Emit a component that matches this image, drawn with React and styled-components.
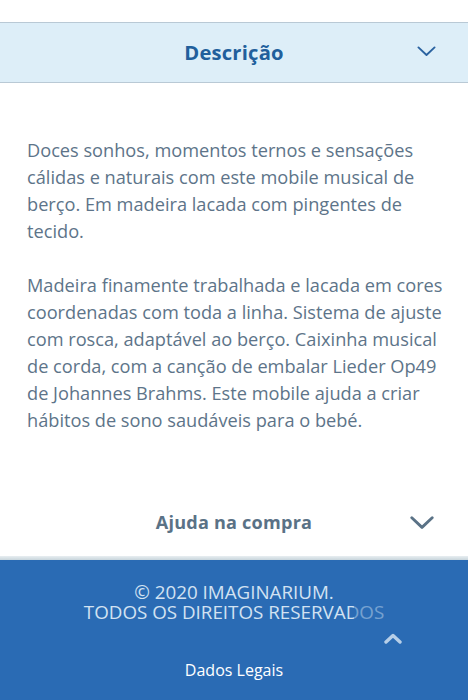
import React from "react";
import styled, { createGlobalStyle } from "styled-components";

const GlobalStyle = createGlobalStyle`
  html, body {
    margin: 0;
    padding: 0;
    background: #ffffff;
  }
  body {
    font-family: "Open Sans", "Liberation Sans", sans-serif;
  }
`;

const Page = styled.div`
  width: 468px;
  height: 700px;
  overflow: hidden;
  display: flex;
  flex-direction: column;
  background: #ffffff;

  & > * {
    flex-shrink: 0;
  }
`;

const TopGap = styled.div`
  height: 22px;
`;

const AccordionHeader = styled.div`
  position: relative;
  height: ${(p) => p.height}px;
  padding-bottom: ${(p) => p.shift || 0}px;
  box-sizing: border-box;
  display: flex;
  align-items: center;
  justify-content: center;
  background: ${(p) => (p.open ? "#ddeef8" : "#ffffff")};
  border-top: ${(p) => (p.open ? "1px solid #b9c9d5" : "none")};
  border-bottom: ${(p) => (p.open ? "1px solid #b9c9d5" : "none")};
`;

const HeaderTitle = styled.span`
  font-size: ${(p) => (p.open ? "20.2px" : "18.1px")};
  font-weight: 700;
  color: ${(p) => (p.open ? "#215f9c" : "#5a7286")};
  letter-spacing: 0.2px;
`;

const Chevron = styled.span`
  position: absolute;
  right: ${(p) => p.right}px;
  top: ${(p) => p.top}px;
  display: flex;
`;

const Body = styled.div`
  padding: 54px 18px 0 27px;
  color: #5d7489;
  font-size: 18.2px;
  line-height: 27px;
`;

const Paragraph = styled.p`
  margin: 0 0 27px 0;
`;

const Spacer = styled.div`
  height: 29px;
`;

const Divider = styled.div`
  height: 4px;
  background: linear-gradient(#e8eef1, #c8d5dc);
`;

const Footer = styled.footer`
  position: relative;
  flex: 1 0 auto;
  background: #2a6bb4;
  display: flex;
  flex-direction: column;
  align-items: center;
  padding-top: 22px;
`;

const Copyright = styled.div`
  text-align: center;
  color: #d2e2f2;
  font-size: 18.8px;
  line-height: 20px;
`;

const LegalLink = styled.a`
  margin-top: 37px;
  color: #ffffff;
  font-size: 16px;
  text-decoration: none;
`;

const ScrollTop = styled.div`
  position: absolute;
  left: 354px;
  top: 37px;
  width: 78px;
  height: 50px;
  display: flex;
  align-items: flex-end;
  justify-content: center;
  padding-bottom: 3px;
  box-sizing: border-box;
  background: rgba(42, 107, 180, 0.55);
`;

const ChevronDown = ({ size, stroke, color }) => (
  <svg width={size} height={size * 0.6} viewBox="0 0 20 12" fill="none">
    <path
      d="M1.5 1.5 L10 9.5 L18.5 1.5"
      stroke={color}
      strokeWidth={stroke}
      strokeLinecap="round"
      strokeLinejoin="round"
    />
  </svg>
);

const App = () => {
  return (
    <Page>
      <GlobalStyle />
      <TopGap />
      <AccordionHeader open height={61} shift={2}>
        <HeaderTitle open>Descrição</HeaderTitle>
        <Chevron right={32} top={23}>
          <ChevronDown size={19} stroke={2} color="#2a62a0" />
        </Chevron>
      </AccordionHeader>
      <Body>
        <Paragraph>
          Doces sonhos, momentos ternos e sensações cálidas e naturais com
          este mobile musical de berço. Em madeira lacada com pingentes de
          tecido.
        </Paragraph>
        <Paragraph>
          Madeira finamente trabalhada e lacada em cores coordenadas com toda
          a linha. Sistema de ajuste com rosca, adaptável ao berço. Caixinha
          musical de corda, com a canção de embalar Lieder Op49 de Johannes
          Brahms. Este mobile ajuda a criar hábitos de sono saudáveis para o
          bebé.
        </Paragraph>
      </Body>
      <Spacer />
      <AccordionHeader height={66} shift={2}>
        <HeaderTitle>Ajuda na compra</HeaderTitle>
        <Chevron right={34} top={26}>
          <ChevronDown size={24} stroke={2.4} color="#5a7286" />
        </Chevron>
      </AccordionHeader>
      <Divider />
      <Footer>
        <Copyright>
          © 2020 IMAGINARIUM.
          <br />
          TODOS OS DIREITOS RESERVADOS
        </Copyright>
        <LegalLink href="#">Dados Legais</LegalLink>
        <ScrollTop>
          <svg width="18" height="11" viewBox="0 0 18 11">
            <path
              d="M2 9 L9 2.5 L16 9"
              stroke="#b7cfe8"
              strokeWidth="3.4"
              fill="none"
              strokeLinecap="round"
              strokeLinejoin="round"
            />
          </svg>
        </ScrollTop>
      </Footer>
    </Page>
  );
};

export default App;
